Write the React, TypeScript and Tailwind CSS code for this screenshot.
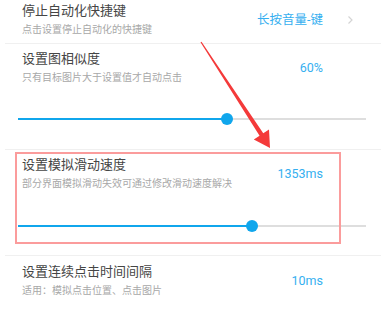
const font = { fontFamily: "Roboto, 'Noto Sans CJK SC', sans-serif" };

function Header({ title, sub, value, chevron }: { title: string; sub: string; value: string; chevron?: boolean }) {
  return (
    <div className="flex items-center">
      <div className="flex-1 pl-[22px]">
        <div className="text-[13px] leading-[16px] text-[#454545]">{title}</div>
        <div className="mt-1 text-[10px] leading-[14px] text-[#a8a8a8]">{sub}</div>
      </div>
      <div className="text-[12.5px] leading-[16px] text-[#35aff0]">{value}</div>
      <div className="flex w-[58px] justify-end pr-[27px]">
        {chevron && (
          <svg width="7" height="10" viewBox="0 0 7 10">
            <path d="M1.5 1.5 L5 5 L1.5 8.5" fill="none" stroke="#d4d4d4" strokeWidth="1.2" />
          </svg>
        )}
      </div>
    </div>
  );
}

function Slider({ pos }: { pos: number }) {
  return (
    <div className="relative ml-[18px] mr-[15px] h-3">
      <div className="absolute left-0 right-0 top-[5px] h-[2px] bg-[#dedede]" />
      <div className="absolute left-0 top-[5px] h-[2px] bg-[#10a6ec]" style={{ width: pos }} />
      <div
        className="absolute top-0 h-3 w-3 rounded-full bg-[#10a6ec]"
        style={{ left: pos - 6 }}
      />
    </div>
  );
}

function Divider() {
  return <div className="ml-[5px] h-px bg-[#f0f0f0]" />;
}

export default function App() {
  return (
    <div className="relative h-[312px] w-[381px] overflow-hidden bg-white" style={font}>
      <div className="h-[43px] pt-[3px]">
        <Header title="停止自动化快捷键" sub="点击设置停止自动化的快捷键" value="长按音量-键" chevron />
      </div>
      <Divider />
      <div className="h-[105px] pt-[7px]">
        <Header title="设置图相似度" sub="只有目标图片大于设置值才自动点击" value="60%" />
        <div className="mt-[28px]">
          <Slider pos={209} />
        </div>
      </div>
      <Divider />
      <div className="h-[105px] pt-[7px]">
        <Header title="设置模拟滑动速度" sub="部分界面模拟滑动失效可通过修改滑动速度解决" value="1353ms" />
        <div className="mt-[29px]">
          <Slider pos={234} />
        </div>
      </div>
      <Divider />
      <div className="pt-[8px]">
        <Header title="设置连续点击时间间隔" sub="适用：模拟点击位置、点击图片" value="10ms" />
      </div>

      <div className="pointer-events-none absolute left-[15px] top-[152px] h-[92px] w-[326px] border-2 border-[#fb9c9c]" />
      <svg className="pointer-events-none absolute left-0 top-0" width="381" height="312">
        <polygon
          points="200.5,42.3 201.5,41.7 263.25,133.3 269,129.6 270,148 253.8,139.4 259.55,135.7"
          fill="#f43a3a"
        />
      </svg>
    </div>
  );
}
